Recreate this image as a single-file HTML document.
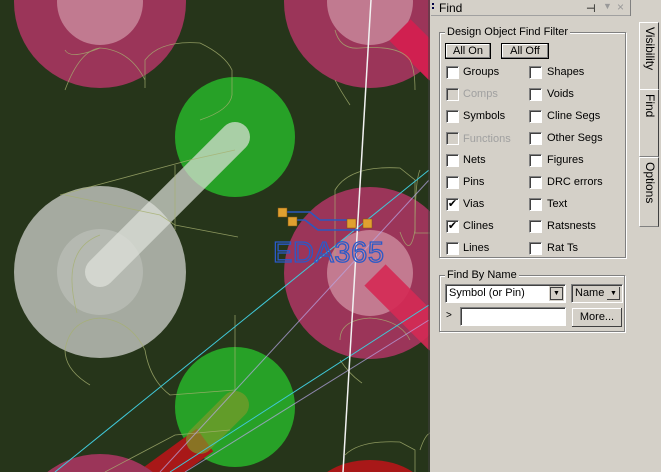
<!DOCTYPE html>
<html><head><meta charset="utf-8"><style>
*{margin:0;padding:0;box-sizing:border-box}
html,body{width:661px;height:472px;overflow:hidden}
body{background:#d4d0c8;font-family:"Liberation Sans",sans-serif;font-size:11px;color:#000;position:relative}
.abs{position:absolute}
.cb{position:absolute;width:13px;height:13px;background:#fff;border:1px solid;border-color:#808080 #fff #fff #808080;box-shadow:inset 1px 1px 0 #404040}
.cb.dis{background:#d4d0c8}
.lbl{position:absolute;font-size:11px;line-height:13px}
.btn{position:absolute;background:#d4d0c8;border:1px solid #000;box-shadow:inset -1px -1px 0 #808080,inset 1px 1px 0 #fff;text-align:center;font-size:11px}
.grp{position:absolute;border:1px solid #808080;box-shadow:1px 1px 0 #fff,inset 1px 1px 0 #fff}
.gt{position:absolute;background:#d4d0c8;padding:0 2px;font-size:11px;line-height:12px}
.tab{position:absolute;left:639px;width:20px;background:#d4d0c8;border:1px solid #fff;border-right-color:#404040;border-bottom-color:#808080}
.tab span{position:absolute;left:3px;top:4px;writing-mode:vertical-rl;font-size:12px}
.sunk{position:absolute;background:#fff;border:1px solid;border-color:#808080 #fff #fff #808080;box-shadow:inset 1px 1px 0 #404040}
</style></head><body>
<svg class="abs" style="left:0;top:0" width="430" height="472" viewBox="0 0 430 472">
<rect width="430" height="472" fill="#26351a"/>
<g>
<circle cx="100" cy="2" r="86" fill="#9b3559"/><circle cx="100" cy="2" r="43" fill="#c17a90"/>
<circle cx="370" cy="2" r="86" fill="#9b3559"/><circle cx="370" cy="2" r="43" fill="#c17a90"/>
<path d="M400 30 L440 70" stroke="#d02050" stroke-width="30"/>
<circle cx="235" cy="137" r="60" fill="#27a127"/>
<circle cx="100" cy="272" r="86" fill="#a5aaa0"/><circle cx="100" cy="272" r="43" fill="#b5b9b1"/>
<line x1="100" y1="272" x2="235" y2="137" stroke="#e0e3dc" stroke-width="30" stroke-linecap="round" opacity="0.7"/>
<circle cx="370" cy="273" r="86" fill="#9b3559"/><circle cx="370" cy="273" r="43" fill="#c37a90"/>
<path d="M375 275 L440 340" stroke="#d52a55" stroke-width="30" opacity="0.9"/>
<circle cx="235" cy="407" r="60" fill="#27a127"/>
<path d="M150 480 L205 440" stroke="#a81818" stroke-width="28"/>
<line x1="200" y1="440" x2="235" y2="405" stroke="#7c9a2a" stroke-width="28" stroke-linecap="round" opacity="0.7"/>
<circle cx="100" cy="540" r="86" fill="#9b3559"/>
<ellipse cx="370" cy="500" rx="60" ry="40" fill="#a81818"/>
</g>
<g fill="none" stroke="#a6b070" stroke-width="0.8" opacity="0.8">
<path d="M77 313 Q60 250 100 235"/><path d="M65 50 Q70 60 100 48 Q130 50 145 80"/>
<path d="M65 90 Q80 50 100 48"/><path d="M145 88 V60 Q160 40 200 43 Q225 55 232 70 V95 Q230 110 200 120"/>
<path d="M335 260 V190 Q350 165 400 168 L415 180 V230 Q410 260 400 232"/>
<path d="M60 195 L190 160 L235 150"/><path d="M65 195 L160 215 L175 225 L238 237"/>
<path d="M175 165 V230"/><path d="M235 315 V390 L170 395 Q150 380 145 350 Q130 320 100 318 Q70 320 65 350 Q65 370 90 385"/>
<path d="M420 170 Q415 180 415 233 H430"/><path d="M340 340 Q340 320 370 318 Q400 320 410 340"/>
<path d="M340 360 Q350 375 362 383"/><path d="M345 455 Q360 440 400 442 L415 450 V472"/><path d="M420 450 Q425 435 430 433"/>
<path d="M105 472 L175 435 L230 430"/>
<path d="M335 30 Q340 50 360 48 Q400 45 410 60 Q415 70 415 90"/><path d="M335 80 Q340 90 350 105"/>
</g>
<g stroke-width="1">
<line x1="55" y1="472" x2="429" y2="170" stroke="#40c8d8"/>
<line x1="170" y1="472" x2="429" y2="305" stroke="#40c8d8"/>
<line x1="160" y1="472" x2="429" y2="180" stroke="#b8a8e8" opacity="0.7"/>
<line x1="185" y1="472" x2="429" y2="320" stroke="#b8a8e8" opacity="0.7"/>
<line x1="371" y1="0" x2="343" y2="472" stroke="#f2f2f2" stroke-width="1.5"/>
</g>
<g stroke="#2a58c0" stroke-width="1.5" fill="none">
<path d="M283 212 H310 L320 220 H352"/><path d="M292 220 H305 L318 230 H360"/>
</g>
<g fill="#e0a030" stroke="#805010" stroke-width="0.5">
<rect x="278" y="208" width="9" height="9"/><rect x="288" y="217" width="9" height="9"/>
<rect x="347" y="219" width="9" height="9"/><rect x="363" y="219" width="9" height="9"/>
</g>
<text x="273" y="262" font-family="Liberation Sans,sans-serif" font-size="29" fill="none" stroke="#2a5ac8" stroke-width="1.3" textLength="111">EDA365</text>
<line x1="429" y1="0" x2="429" y2="472" stroke="#404040"/>
</svg>
<div class="abs" style="left:431px;top:0;width:199px;height:16px;background:#d4d0c8;border-bottom:1px solid #a0a0a0"></div>
<div class="abs" style="left:432px;top:3px;width:2px;height:2px;background:#004;box-shadow:0 4px 0 #004"></div>
<div class="abs" style="left:439px;top:1px;font-size:12px">Find</div>
<div class="abs" style="left:586px;top:2px;font-size:11px">⊣</div>
<div class="abs" style="left:603px;top:1px;font-size:9px;color:#999">▼</div>
<div class="abs" style="left:617px;top:0;font-size:12px;color:#999">×</div>
<div class="abs" style="left:630px;top:0;width:1px;height:16px;background:#808080"></div>
<div class="grp" style="left:439px;top:32px;width:187px;height:226px"></div>
<div class="gt" style="left:445px;top:26px">Design Object Find Filter</div>
<div class="btn" style="left:445px;top:43px;width:46px;height:16px;line-height:14px">All On</div>
<div class="btn" style="left:501px;top:43px;width:48px;height:16px;line-height:14px">All Off</div>
<div class="cb" style="left:446px;top:66px"></div><div class="lbl" style="left:463px;top:66px">Groups</div>
<div class="cb dis" style="left:446px;top:88px"></div><div class="lbl" style="left:463px;top:88px;color:#a0a0a0">Comps</div>
<div class="cb" style="left:446px;top:110px"></div><div class="lbl" style="left:463px;top:110px">Symbols</div>
<div class="cb dis" style="left:446px;top:132px"></div><div class="lbl" style="left:463px;top:133px;color:#a0a0a0">Functions</div>
<div class="cb" style="left:446px;top:154px"></div><div class="lbl" style="left:463px;top:154px">Nets</div>
<div class="cb" style="left:446px;top:176px"></div><div class="lbl" style="left:463px;top:176px">Pins</div>
<div class="cb" style="left:446px;top:198px;font-size:11px;line-height:10px;text-align:center">✔</div><div class="lbl" style="left:463px;top:198px">Vias</div>
<div class="cb" style="left:446px;top:220px;font-size:11px;line-height:10px;text-align:center">✔</div><div class="lbl" style="left:463px;top:220px">Clines</div>
<div class="cb" style="left:446px;top:242px"></div><div class="lbl" style="left:463px;top:242px">Lines</div>
<div class="cb" style="left:529px;top:66px"></div><div class="lbl" style="left:547px;top:66px">Shapes</div>
<div class="cb" style="left:529px;top:88px"></div><div class="lbl" style="left:547px;top:88px">Voids</div>
<div class="cb" style="left:529px;top:110px"></div><div class="lbl" style="left:547px;top:110px">Cline Segs</div>
<div class="cb" style="left:529px;top:132px"></div><div class="lbl" style="left:547px;top:132px">Other Segs</div>
<div class="cb" style="left:529px;top:154px"></div><div class="lbl" style="left:547px;top:154px">Figures</div>
<div class="cb" style="left:529px;top:176px"></div><div class="lbl" style="left:547px;top:176px">DRC errors</div>
<div class="cb" style="left:529px;top:198px"></div><div class="lbl" style="left:547px;top:198px">Text</div>
<div class="cb" style="left:529px;top:220px"></div><div class="lbl" style="left:547px;top:220px">Ratsnests</div>
<div class="cb" style="left:529px;top:242px"></div><div class="lbl" style="left:547px;top:242px">Rat Ts</div>
<div class="grp" style="left:439px;top:275px;width:186px;height:57px"></div>
<div class="gt" style="left:445px;top:269px">Find By Name</div>
<div class="sunk" style="left:445px;top:284px;width:121px;height:19px"><span style="position:absolute;left:3px;top:2px">Symbol (or Pin)</span><div class="btn" style="right:1px;top:1px;width:15px;height:15px;border-color:#d4d0c8;box-shadow:1px 1px 0 #404040 inset,-1px -1px 0 #404040 inset;font-size:7px;line-height:14px">▼</div></div>
<div class="sunk" style="left:571px;top:284px;width:52px;height:19px;background:#d4d0c8"><span style="position:absolute;left:3px;top:2px">Name</span><div class="btn" style="right:1px;top:1px;width:15px;height:15px;border-color:#d4d0c8;box-shadow:-1px -1px 0 #404040 inset;font-size:7px;line-height:14px">▼</div></div>
<div class="abs" style="left:446px;top:310px;font-size:10px">&gt;</div>
<div class="sunk" style="left:460px;top:307px;width:106px;height:19px"></div>
<div class="btn" style="left:571px;top:307px;width:52px;height:21px;line-height:19px;border-color:#d4d0c8;box-shadow:inset -1px -1px 0 #404040,inset 1px 1px 0 #fff">More...</div>
<div class="tab" style="top:22px;height:68px"><span>Visibility</span></div>
<div class="tab" style="top:89px;height:68px"><span>Find</span></div>
<div class="tab" style="top:157px;height:70px"><span>Options</span></div>
</body></html>
